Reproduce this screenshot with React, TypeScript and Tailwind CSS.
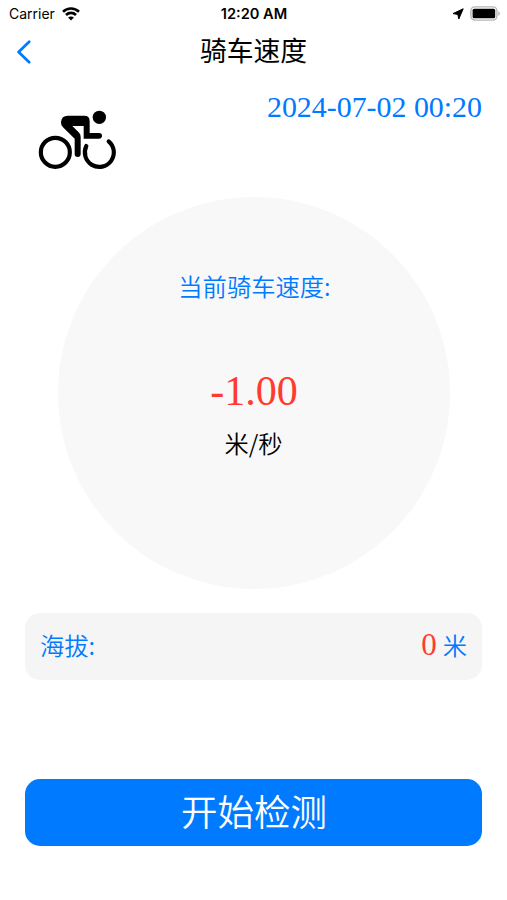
import type { ReactNode } from "react";

const reading = {
  time: "2024-07-02 00:20",
  speed: "-1.00",
  altitude: "0",
};

export default function App() {
  return (
    <div className="flex h-[900px] w-[507px] flex-col overflow-hidden bg-white font-['Inter','Noto_Sans_CJK_SC',sans-serif] text-black">
      <StatusBar />
      <NavBar title="骑车速度" />

      <main className="flex flex-1 flex-col px-[25px]">
        <div className="flex h-[120px] items-start justify-between">
          <CyclistIcon />
          <SerifText className="mt-[13px] text-[29.9px] leading-[34px] text-[#007aff]">{reading.time}</SerifText>
        </div>

        <section className="flex size-[392px] shrink-0 flex-col items-center self-center rounded-full bg-[#f8f8f8]">
          <p className="mt-[71px] pl-[2px] font-['Noto_Sans_CJK_SC',sans-serif] text-[24.3px] leading-[36px] font-[350] text-[#007aff]">
            当前骑车速度:
          </p>
          <SerifText className="mt-[63px] pl-px text-[42px] leading-[48px] text-[#ff3b30]">{reading.speed}</SerifText>
          <p className="mt-[10px] font-['Noto_Sans_CJK_SC',sans-serif] text-[24.3px] leading-[36px] font-[350]">米/秒</p>
        </section>

        <section className="mt-[24px] flex h-[67px] items-center justify-between rounded-[15px] bg-[#f5f5f5] px-[15px] pb-[3px] font-['Noto_Sans_CJK_SC',sans-serif] text-[24.3px] leading-[36px] font-[350] text-[#007aff]">
          <span>海拔:</span>
          <span className="flex items-center gap-[6px]">
            <SerifText className="text-[31px] leading-[36px] font-normal text-[#ff3b30]">{reading.altitude}</SerifText>
            <span>米</span>
          </span>
        </section>

        <button
          type="button"
          className="mt-[99px] flex h-[67px] items-center justify-center rounded-[15px] bg-[#007aff] pb-[4px] pl-px font-['Noto_Sans_CJK_SC',sans-serif] text-[36.5px] leading-[54px] font-[350] text-white"
        >
          开始检测
        </button>
      </main>
    </div>
  );
}

function SerifText({ className, children }: { className: string; children: ReactNode }) {
  return <span className={`font-['Liberation_Serif',serif] ${className}`}>{children}</span>;
}

function StatusBar() {
  return (
    <header className="grid h-[27px] grid-cols-3 items-center pr-[6px] pl-[9px] text-[14px] leading-[18px]">
      <div className="flex items-center gap-[7px]">
        <span>Carrier</span>
        <svg width="18" height="14" viewBox="0 0 18 14" fill="none" stroke="currentColor" strokeWidth="2.6">
          <path d="M1 4.8C5.5.4 12.5.4 17 4.8" />
          <path d="M4 8C6.8 5.2 11.2 5.2 14 8" />
          <path d="M9 13.6 6.1 10.6C7.7 9 10.3 9 11.9 10.6Z" fill="currentColor" stroke="none" />
        </svg>
      </div>
      <span className="pr-[2px] text-center text-[14.6px] font-semibold">12:20 AM</span>
      <div className="flex items-center justify-end gap-[6px]">
        <svg width="12" height="12" viewBox="0 0 12 12" fill="currentColor">
          <path d="M11.2.8 6.8 11 5.8 6.4 1 5.6Z" stroke="currentColor" strokeWidth="1" strokeLinejoin="round" />
        </svg>
        <svg width="31" height="15" viewBox="0 0 31 15">
          <rect x=".9" y=".9" width="26" height="13.2" rx="4" fill="none" stroke="#b5b5b5" strokeWidth="1.4" />
          <rect x="2.6" y="2.7" width="22.6" height="9.6" rx="1.6" />
          <path d="M28.3 5.2C30.4 5.8 30.4 9.2 28.3 9.8Z" fill="#b5b5b5" />
        </svg>
      </div>
    </header>
  );
}

function NavBar({ title }: { title: string }) {
  return (
    <nav className="grid h-[50px] grid-cols-3 items-center px-[16px]">
      <svg width="16" height="24" viewBox="0 0 16 24" fill="none" stroke="#007aff" strokeWidth="2.7" strokeLinecap="round" strokeLinejoin="round">
        <path d="M13.2 1.7 2.6 12 13.2 22.3" />
      </svg>
      <h1 className="pb-[4px] text-center font-['Noto_Sans_CJK_SC',sans-serif] text-[26.8px] leading-[40px] whitespace-nowrap">
        {title}
      </h1>
    </nav>
  );
}

function CyclistIcon() {
  return (
    <svg className="mt-[33px] ml-[13px]" width="79" height="60" viewBox="54 60 237 180" fill="none" stroke="#000" strokeWidth="12.5" strokeLinecap="round">
      <circle cx="106" cy="187" r="43.5" />
      <path d="M199 168A43.5 43.5 0 1 0 266 154" />
      <circle cx="238" cy="82" r="20" fill="#000" stroke="none" />
      <path
        d="M143 77H193Q209 77 209 93V129H237Q246 129 246 137.500Q246 146 237 146H191V108H157L178 129Q182 133 182 141V192Q182 201 173 201Q164 201 164 192V146L129 112Q122 104 123 96Q125 77 143 77Z"
        fill="#000"
        stroke="none"
      />
    </svg>
  );
}
